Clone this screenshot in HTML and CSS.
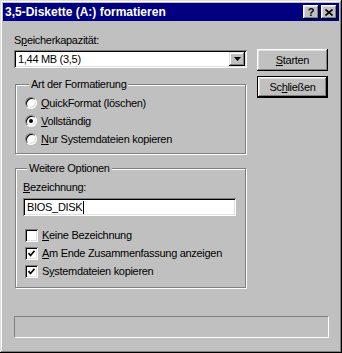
FILE: index.html
```html
<!DOCTYPE html>
<html lang="de">
<head>
  <meta charset="UTF-8">
  <title>3,5-Diskette (A:) formatieren</title>
  <link rel="stylesheet" href="styles.css">
</head>
<body>

<div class="window">
  <!-- Title bar -->
  <div class="titlebar">
    <span class="title">3,5-Diskette (A:) formatieren</span>
    <div class="caption-buttons">
      <span class="cap-btn cap-help">?</span>
      <span class="cap-btn">
        <svg width="8" height="7" viewBox="0 0 8 7"><path d="M0.5 0.5 L7.5 6.5 M7.5 0.5 L0.5 6.5" stroke="#000" stroke-width="1.6"/></svg>
      </span>
    </div>
  </div>

  <div class="content">
    <div class="main">
      <div class="left">
        <div class="label">S<u>p</u>eicherkapazität:</div>
        <div class="combo">
          <span class="combo-text">1,44 MB (3,5)</span>
          <span class="combo-btn">
            <svg width="7" height="4" viewBox="0 0 7 4"><path d="M0 0 H7 L3.5 4 Z" fill="#000"/></svg>
          </span>
        </div>

        <!-- Art der Formatierung -->
        <fieldset class="group group-format">
          <legend>Art der Formatierung</legend>
          <div class="option"><span class="radio"></span><span><u>Q</u>uickFormat (löschen)</span></div>
          <div class="option"><span class="radio checked"></span><span><u>V</u>ollständig</span></div>
          <div class="option"><span class="radio"></span><span><u>N</u>ur Systemdateien kopieren</span></div>
        </fieldset>

        <!-- Weitere Optionen -->
        <fieldset class="group group-more">
          <legend>Weitere Optionen</legend>
          <div class="label-small"><u>B</u>ezeichnung:</div>
          <div class="textbox">BIOS_DISK<span class="caret"></span></div>
          <div class="checks">
            <div class="option"><span class="checkbox"></span><span><u>K</u>eine Bezeichnung</span></div>
            <div class="option"><span class="checkbox"><svg width="7" height="7" viewBox="0 0 7 7"><path d="M0.5 3 L2.5 5.5 L6.5 0.8" stroke="#000" stroke-width="1.7" fill="none"/></svg></span><span><u>A</u>m Ende Zusammenfassung anzeigen</span></div>
            <div class="option"><span class="checkbox"><svg width="7" height="7" viewBox="0 0 7 7"><path d="M0.5 3 L2.5 5.5 L6.5 0.8" stroke="#000" stroke-width="1.7" fill="none"/></svg></span><span>S<u>y</u>stemdateien kopieren</span></div>
          </div>
        </fieldset>
      </div>

      <div class="buttons">
        <button class="btn"><u>S</u>tarten</button>
        <button class="btn btn-default">Sc<u>h</u>ließen</button>
      </div>
    </div>

    <div class="progress"></div>
  </div>
</div>

</body>
</html>
```
FILE: styles.css
```css
body {
  margin: 0;
  padding: 0;
  background-color: #c0c0c0;
  font-family: "Liberation Sans", Arial, sans-serif;
  font-size: 11px;
  letter-spacing: -0.3px;
  color: #000;
}
u {
  text-decoration-thickness: 1px;
  text-underline-offset: 1px;
}
.window {
  width: 342px;
  height: 353px;
  box-sizing: border-box;
  padding: 3px;
  background-color: #c0c0c0;
  box-shadow: inset -1px -1px #000, inset 1px 1px #dfdfdf, inset -2px -2px #808080, inset 2px 2px #fff;
}
.titlebar {
  height: 18px;
  background-color: #000080;
  color: #fff;
  font-weight: bold;
  font-size: 12px;
  letter-spacing: 0;
  display: flex;
  align-items: center;
  justify-content: space-between;
  padding: 0 2px;
}
.caption-buttons {
  display: flex;
  gap: 2px;
}
.cap-btn {
  width: 16px;
  height: 14px;
  box-sizing: border-box;
  background-color: #c0c0c0;
  color: #000;
  display: flex;
  align-items: center;
  justify-content: center;
  box-shadow: inset -1px -1px #000, inset 1px 1px #fff, inset -2px -2px #808080, inset 2px 2px #dfdfdf;
}
.cap-help {
  font-size: 11px;
  line-height: 14px;
}
.content {
  padding-left: 11px;
}
.main {
  display: flex;
}
.left {
  width: 233px;
}
.label {
  margin-top: 13px;
  height: 13px;
  line-height: 13px;
}
.combo {
  margin-top: 3px;
  height: 18px;
  box-sizing: border-box;
  background-color: #fff;
  display: flex;
  align-items: center;
  justify-content: space-between;
  padding: 2px;
  box-shadow: inset 1px 1px #808080, inset -1px -1px #fff, inset 2px 2px #000, inset -2px -2px #dfdfdf;
}
.combo-text {
  padding-left: 2px;
}
.combo-btn {
  width: 16px;
  height: 14px;
  box-sizing: border-box;
  background-color: #c0c0c0;
  display: flex;
  align-items: center;
  justify-content: center;
  box-shadow: inset -1px -1px #000, inset 1px 1px #dfdfdf, inset -2px -2px #808080, inset 2px 2px #fff;
}
.group {
  margin: 0 0 0 1px;
  width: 231px;
  box-sizing: border-box;
  border: 1px solid #808080;
  box-shadow: inset 1px 1px #fff, 1px 1px #fff;
  padding: 3px 0 5px 9px;
}
.group legend {
  padding: 0 2px;
  margin-left: 4px;
  line-height: 13px;
  background-color: #c0c0c0;
}
.group-format {
  margin-top: 10px;
}
.group-more {
  margin-top: 8px;
  padding: 6px 0 7px 7px;
}
.option {
  height: 18px;
  display: flex;
  align-items: center;
  gap: 4px;
}
.radio {
  width: 12px;
  height: 12px;
  box-sizing: border-box;
  border-radius: 50%;
  background-color: #fff;
  border: 1px solid;
  border-color: #808080 #fff #fff #808080;
  box-shadow: inset 1px 1px #000, inset -1px -1px #dfdfdf;
  display: flex;
  align-items: center;
  justify-content: center;
}
.radio.checked::after {
  content: "";
  width: 4px;
  height: 4px;
  border-radius: 50%;
  background-color: #000;
}
.label-small {
  height: 13px;
  line-height: 13px;
}
.textbox {
  margin-top: 4px;
  width: 213px;
  height: 18px;
  box-sizing: border-box;
  background-color: #fff;
  padding: 2px 4px;
  line-height: 14px;
  display: flex;
  align-items: center;
  box-shadow: inset 1px 1px #808080, inset -1px -1px #fff, inset 2px 2px #000, inset -2px -2px #dfdfdf;
}
.caret {
  width: 1px;
  height: 13px;
  margin-left: 1px;
  background-color: #000;
}
.checks {
  margin-top: 10px;
  margin-left: 2px;
}
.checkbox {
  width: 13px;
  height: 13px;
  box-sizing: border-box;
  background-color: #fff;
  display: flex;
  align-items: center;
  justify-content: center;
  box-shadow: inset 1px 1px #808080, inset -1px -1px #fff, inset 2px 2px #000, inset -2px -2px #dfdfdf;
}
.buttons {
  margin-top: 28px;
  margin-left: 10px;
  display: flex;
  flex-direction: column;
  gap: 5px;
}
.btn {
  width: 71px;
  height: 22px;
  border: none;
  padding: 0;
  background-color: #c0c0c0;
  font-family: inherit;
  font-size: 11px;
  letter-spacing: -0.3px;
  color: #000;
  box-shadow: inset -1px -1px #000, inset 1px 1px #fff, inset -2px -2px #808080, inset 2px 2px #dfdfdf;
}
.btn-default {
  box-shadow: inset 0 0 0 1px #000, inset -2px -2px #000, inset 2px 2px #fff, inset -3px -3px #808080, inset 3px 3px #dfdfdf;
}
.progress {
  margin-top: 28px;
  width: 315px;
  height: 22px;
  box-sizing: border-box;
  border: 1px solid;
  border-color: #808080 #fff #fff #808080;
}
```
